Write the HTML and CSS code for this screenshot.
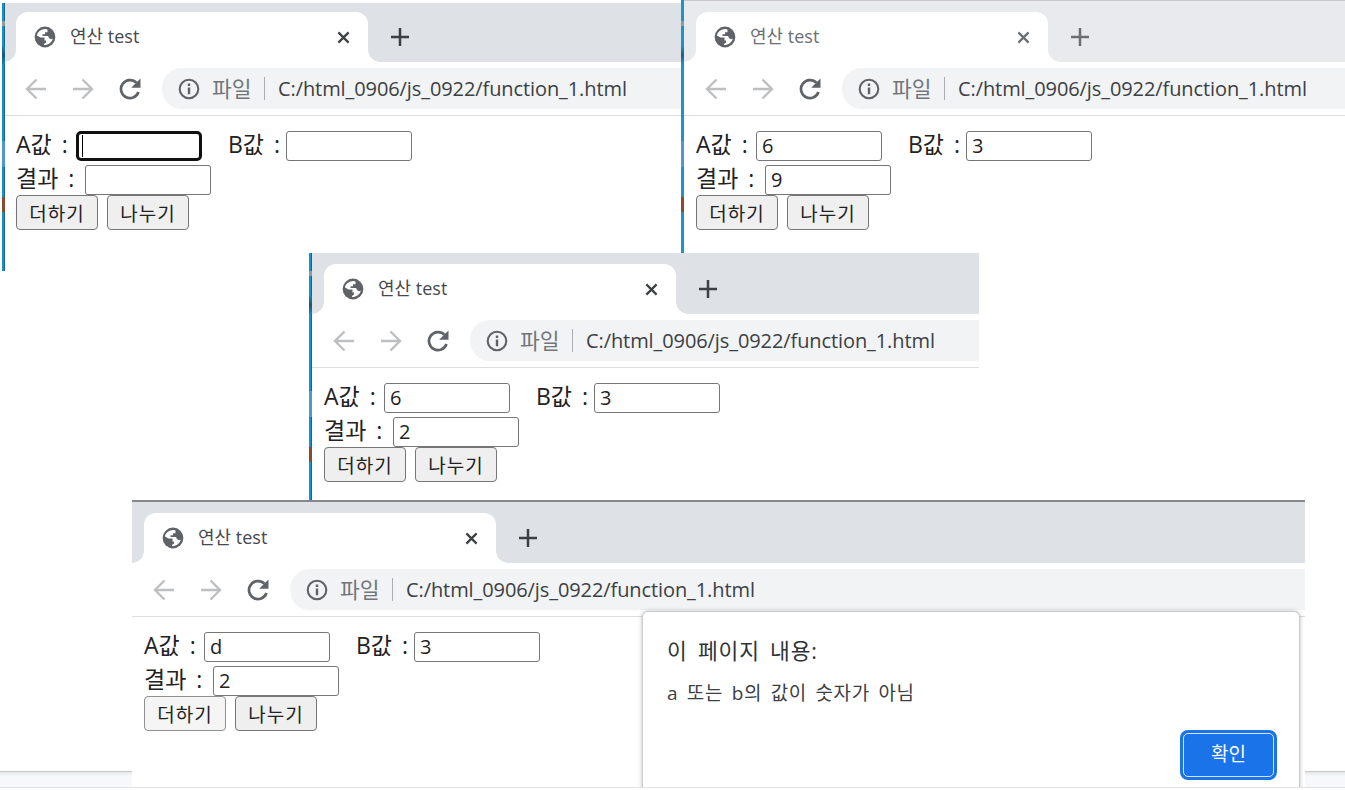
FILE: index.html
```html
<!DOCTYPE html>
<html lang="ko">
<head>
    <meta charset="UTF-8">
    <title>연산 test</title>
    <link rel="stylesheet" href="styles.css">
</head>
<body>
    <!-- Icons -->
    <svg class="defs">
        <symbol id="globe" viewBox="0 0 22 22">
            <circle cx="11" cy="11" r="10.4" fill="#5f6368"/>
            <path fill="#fff" d="M11.5 3C7 3 3.2 6 3 9.5L6.5 11.5H10.5V14.5H12V16.5L10 18V19C14 19.2 18 16.5 18.8 12.5C17.5 13.5 16 13.3 15 12L14 10H8.5V8.2H11V6.2H13.5V3.4Z"/>
        </symbol>
        <symbol id="close" viewBox="0 0 14 14">
            <path fill="none" stroke="currentColor" stroke-width="2.4" d="M1.5 1.5L12.5 12.5M12.5 1.5L1.5 12.5"/>
        </symbol>
        <symbol id="plus" viewBox="0 0 18 18">
            <path fill="none" stroke="currentColor" stroke-width="2.5" d="M9 0V18M0 9H18"/>
        </symbol>
        <symbol id="back" viewBox="0 0 22 22">
            <path fill="none" stroke="#bdbfc1" stroke-width="2.4" d="M21 11H2M11.5 1.5L2 11L11.5 20.5"/>
        </symbol>
        <symbol id="forward" viewBox="0 0 22 22">
            <path fill="none" stroke="#bdbfc1" stroke-width="2.4" d="M1 11H20M10.5 1.5L20 11L10.5 20.5"/>
        </symbol>
        <symbol id="reload" viewBox="0 0 22 22">
            <path fill="none" stroke="#5f6368" stroke-width="2.7" d="M19.5 14A9 9 0 1 1 17.5 4.8"/>
            <path fill="#5f6368" d="M21.5 0.5V9.8H12.2Z"/>
        </symbol>
        <symbol id="info" viewBox="0 0 22 22">
            <circle cx="11" cy="11" r="9.3" fill="none" stroke="#5f6368" stroke-width="2.1"/>
            <path fill="#5f6368" d="M9.8 9.5H12.2V16.3H9.8ZM9.8 5.6H12.2V8H9.8Z"/>
        </symbol>
    </svg>

    <div class="footer-strip"></div>

    <!-- Empty form -->
    <div class="window win-empty">
        <div class="tab-strip">
            <div class="tab">
                <svg class="icon"><use href="#globe"/></svg>
                <span class="tab-title">연산 test</span>
                <svg class="close"><use href="#close"/></svg>
            </div>
            <svg class="plus"><use href="#plus"/></svg>
        </div>
        <div class="toolbar">
            <svg class="icon"><use href="#back"/></svg>
            <svg class="icon"><use href="#forward"/></svg>
            <svg class="icon"><use href="#reload"/></svg>
            <div class="address">
                <svg class="icon"><use href="#info"/></svg>
                <span class="scheme">파일</span>
                <span class="url">C:/html_0906/js_0922/function_1.html</span>
            </div>
        </div>
        <div class="content">
            <div class="row">
                <span class="label label-a">A값 :</span><span class="field focused"><span class="caret"></span></span>
                <span class="label label-b">B값 :</span><span class="field"></span>
            </div>
            <div class="row">
                <span class="label label-result">결과 :</span><span class="field"></span>
            </div>
            <div class="buttons">
                <button>더하기</button>
                <button>나누기</button>
            </div>
        </div>
    </div>

    <!-- Addition -->
    <div class="window win-add">
        <div class="tab-strip">
            <div class="tab">
                <svg class="icon"><use href="#globe"/></svg>
                <span class="tab-title">연산 test</span>
                <svg class="close"><use href="#close"/></svg>
            </div>
            <svg class="plus"><use href="#plus"/></svg>
        </div>
        <div class="toolbar">
            <svg class="icon"><use href="#back"/></svg>
            <svg class="icon"><use href="#forward"/></svg>
            <svg class="icon"><use href="#reload"/></svg>
            <div class="address">
                <svg class="icon"><use href="#info"/></svg>
                <span class="scheme">파일</span>
                <span class="url">C:/html_0906/js_0922/function_1.html</span>
            </div>
        </div>
        <div class="content">
            <div class="row">
                <span class="label label-a">A값 :</span><span class="field">6</span>
                <span class="label label-b">B값 :</span><span class="field">3</span>
            </div>
            <div class="row">
                <span class="label label-result">결과 :</span><span class="field">9</span>
            </div>
            <div class="buttons">
                <button>더하기</button>
                <button>나누기</button>
            </div>
        </div>
    </div>

    <!-- Division -->
    <div class="window win-divide">
        <div class="tab-strip">
            <div class="tab">
                <svg class="icon"><use href="#globe"/></svg>
                <span class="tab-title">연산 test</span>
                <svg class="close"><use href="#close"/></svg>
            </div>
            <svg class="plus"><use href="#plus"/></svg>
        </div>
        <div class="toolbar">
            <svg class="icon"><use href="#back"/></svg>
            <svg class="icon"><use href="#forward"/></svg>
            <svg class="icon"><use href="#reload"/></svg>
            <div class="address">
                <svg class="icon"><use href="#info"/></svg>
                <span class="scheme">파일</span>
                <span class="url">C:/html_0906/js_0922/function_1.html</span>
            </div>
        </div>
        <div class="content">
            <div class="row">
                <span class="label label-a">A값 :</span><span class="field">6</span>
                <span class="label label-b">B값 :</span><span class="field">3</span>
            </div>
            <div class="row">
                <span class="label label-result">결과 :</span><span class="field">2</span>
            </div>
            <div class="buttons">
                <button>더하기</button>
                <button>나누기</button>
            </div>
        </div>
    </div>

    <!-- Not a number -->
    <div class="window win-alert">
        <div class="tab-strip">
            <div class="tab">
                <svg class="icon"><use href="#globe"/></svg>
                <span class="tab-title">연산 test</span>
                <svg class="close"><use href="#close"/></svg>
            </div>
            <svg class="plus"><use href="#plus"/></svg>
        </div>
        <div class="toolbar">
            <svg class="icon"><use href="#back"/></svg>
            <svg class="icon"><use href="#forward"/></svg>
            <svg class="icon"><use href="#reload"/></svg>
            <div class="address">
                <svg class="icon"><use href="#info"/></svg>
                <span class="scheme">파일</span>
                <span class="url">C:/html_0906/js_0922/function_1.html</span>
            </div>
        </div>
        <div class="content">
            <div class="row">
                <span class="label label-a">A값 :</span><span class="field">d</span>
                <span class="label label-b">B값 :</span><span class="field">3</span>
            </div>
            <div class="row">
                <span class="label label-result">결과 :</span><span class="field">2</span>
            </div>
            <div class="buttons">
                <button class="hovered">더하기</button>
                <button>나누기</button>
            </div>
        </div>
        <div class="dialog">
            <div class="dialog-title">이 페이지 내용:</div>
            <div class="dialog-text">a 또는 b의 값이 숫자가 아님</div>
            <button class="confirm">확인</button>
        </div>
    </div>
</body>
</html>
```
FILE: styles.css
```css
* {
    box-sizing: border-box;
}
body {
    margin: 0;
    height: 790px;
    position: relative;
    overflow: hidden;
    background: #fff;
    font-family: "Open Sans", "Noto Sans CJK KR", sans-serif;
    color: #222;
}
svg {
    display: block;
    flex: none;
}
.defs {
    position: absolute;
    width: 0;
    height: 0;
}
.icon {
    width: 22px;
    height: 22px;
}
.footer-strip {
    position: absolute;
    left: 0;
    right: 0;
    top: 771px;
    height: 17px;
    border-top: 1px solid #c8c8c8;
    border-bottom: 1px solid #e2e2e2;
    background: linear-gradient(#e6e7e9, #f7f8fb 4px);
}

/* Windows */
.window {
    position: absolute;
    overflow: hidden;
    background: #fff;
}
.win-empty,
.win-add,
.win-divide {
    padding-left: 3px;
}
.win-empty::before,
.win-add::before,
.win-divide::before {
    content: "";
    position: absolute;
    left: 0;
    top: 0;
    bottom: 0;
    width: 3px;
    background:
        linear-gradient(#8d9aa3, #8d9aa3) 0 18px / 3px 5px no-repeat,
        linear-gradient(#1585b5, #1a5878, #1585b5) 0 43px / 3px 18px no-repeat,
        linear-gradient(#4c9aca, #4c9aca) 0 138px / 3px 26px no-repeat,
        linear-gradient(#8a4a2c, #8a4a2c) 0 194px / 3px 15px no-repeat,
        linear-gradient(90deg, #1294cd 65%, #1b6485 65%);
}
.win-empty {
    left: 2px;
    top: 3px;
    width: 680px;
    height: 268px;
}
.win-empty .tab-strip {
    margin-left: -1px;
    height: 59px;
}
.win-empty .toolbar,
.win-empty .content {
    margin-left: -1px;
}
.win-add {
    left: 681px;
    top: 0;
    width: 664px;
    height: 270px;
}
.win-add::before {
    background:
        linear-gradient(#8d9aa3, #8d9aa3) 0 21px / 3px 5px no-repeat,
        linear-gradient(#1e93c9, #1a6288, #1e93c9) 0 46px / 3px 18px no-repeat,
        linear-gradient(#4c9aca, #4c9aca) 0 141px / 3px 26px no-repeat,
        linear-gradient(#8a4a2c, #8a4a2c) 0 197px / 3px 15px no-repeat,
        #1e93c9;
}
.win-add .tab-strip {
    height: 62px;
    border-top: 1px solid #c7c9ce;
    background: #e8eaed;
}
.win-divide {
    left: 309px;
    top: 253px;
    width: 670px;
    height: 248px;
}
.win-divide .tab-strip {
    height: 61px;
}
.win-alert {
    left: 132px;
    top: 500px;
    width: 1173px;
    height: 287px;
}
.win-alert .tab-strip {
    height: 63px;
    border-top: 2px solid #86898c;
}

/* Tabs */
.tab-strip {
    display: flex;
    align-items: flex-end;
    padding-left: 12px;
    background: #dee1e6;
    color: #3c4043;
}
.tab {
    position: relative;
    display: flex;
    align-items: center;
    width: 352px;
    height: 50px;
    padding: 0 18px;
    background: #fff;
    border-radius: 12px 12px 0 0;
}
.tab::before,
.tab::after {
    content: "";
    position: absolute;
    bottom: 0;
    width: 12px;
    height: 12px;
}
.tab::before {
    left: -12px;
    background: radial-gradient(circle at 0 0, transparent 11.5px, #fff 12px);
}
.tab::after {
    right: -12px;
    background: radial-gradient(circle at 100% 0, transparent 11.5px, #fff 12px);
}
.tab-title {
    flex: 1;
    margin: -2px 0 0 14px;
    font-size: 18px;
    line-height: 24px;
    white-space: nowrap;
    color: #45494d;
}
.close {
    width: 13px;
    height: 13px;
}
.plus {
    width: 18px;
    height: 18px;
    margin: 0 0 16px 23px;
}
.win-add .tab-strip,
.win-add .tab-title {
    color: #6b6f74;
}

/* Toolbar */
.toolbar {
    display: flex;
    align-items: center;
    gap: 25px;
    height: 54px;
    padding-left: 21px;
    border-bottom: 1px solid #dcdde0;
}
.address {
    flex: 1;
    display: flex;
    align-items: center;
    height: 41px;
    margin-left: -4px;
    padding-left: 16px;
    background: #f1f3f4;
    border-radius: 20px 0 0 20px;
    white-space: nowrap;
}
.scheme {
    width: 53px;
    margin-left: 12px;
    border-right: 1px solid #a9acb0;
    font-size: 21.5px;
    line-height: 23px;
    color: #72767b;
}
.url {
    margin-left: 13px;
    font-size: 20px;
    letter-spacing: -0.09px;
    line-height: 28px;
    color: #3c4043;
}

/* Page content */
.content {
    padding: 15px 0 0 12px;
}
.row {
    display: flex;
    align-items: center;
    height: 30px;
    margin-bottom: 4px;
    font-size: 23px;
    line-height: 30px;
    white-space: nowrap;
}
.row + .row {
    margin-bottom: 0;
}
.label {
    padding-bottom: 5px;
    word-spacing: 4px;
}
.label-a {
    width: 60px;
}
.label-b {
    width: 58px;
    margin-left: 26px;
}
.label-result {
    width: 69px;
}
.field {
    width: 126px;
    height: 30px;
    padding-left: 5px;
    border: 1px solid #767676;
    border-radius: 3px;
    background: #fff;
    font-size: 20px;
    line-height: 28px;
}
.field.focused {
    border: 3px solid #101010;
    border-radius: 5px;
    padding: 1px 0 0 3px;
}
.caret {
    display: block;
    width: 1px;
    height: 22px;
    background: #000;
}
.buttons {
    display: flex;
    gap: 9px;
}
.buttons button {
    width: 82px;
    height: 35px;
    padding: 0;
    border: 1px solid #767676;
    border-radius: 4px;
    background: #efefef;
    font-family: inherit;
    font-size: 19px;
    letter-spacing: 1px;
    color: #222;
}
.buttons .hovered {
    background: #f5f5f5;
    border-color: #8f8f8f;
}

/* Alert dialog */
.dialog {
    position: absolute;
    left: 510px;
    top: 111px;
    width: 658px;
    height: 190px;
    padding: 24px 23px 0 24px;
    background: #fff;
    border: 1px solid #c9cbcd;
    border-radius: 6px;
    box-shadow: 0 0 4px rgba(0, 0, 0, 0.25);
    white-space: nowrap;
}
.dialog-title {
    font-size: 21.5px;
    letter-spacing: 0.8px;
    word-spacing: 4px;
    line-height: 30px;
    color: #303336;
}
.dialog-text {
    margin-top: 13px;
    font-size: 19px;
    letter-spacing: 0.65px;
    word-spacing: 3px;
    line-height: 28px;
    color: #3c4043;
}
.confirm {
    display: block;
    width: 91px;
    height: 44px;
    margin: 26px 2px 0 auto;
    padding: 0 0 4px;
    border: 1px solid #d5e4fc;
    border-radius: 5px;
    box-shadow: 0 0 0 3px #1a73e8;
    background: #1a73e8;
    font-family: inherit;
    font-size: 19px;
    color: #fff;
}
```
